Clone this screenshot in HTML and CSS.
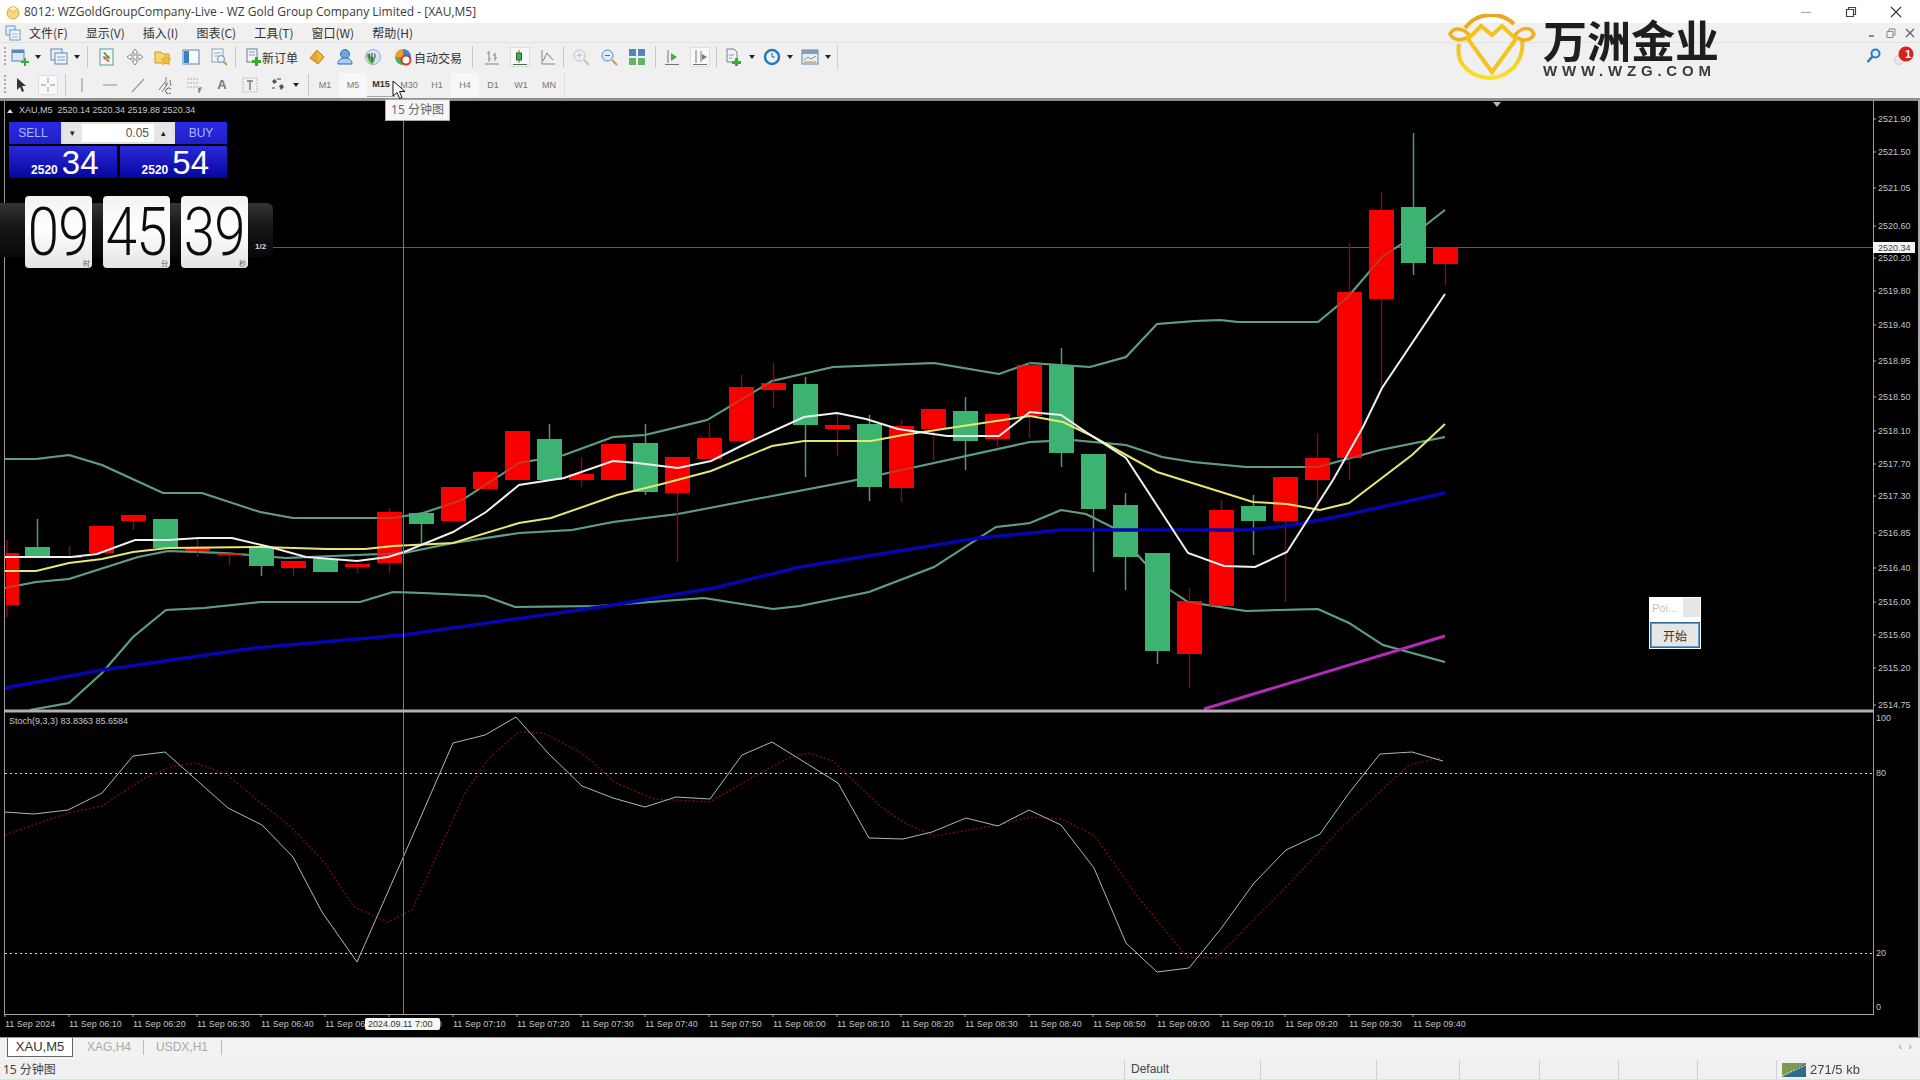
FILE: index.html
```html
<!DOCTYPE html>
<html lang="zh">
<head>
<meta charset="utf-8">
<title>8012: WZGoldGroupCompany-Live</title>
<link rel="stylesheet" href="styles.css">
</head>
<body>
<div class="window">
  <header class="titlebar">
    <svg class="app-icon" width="16" height="16" viewBox="0 0 16 16"><circle cx="8" cy="9" r="6" fill="#f6d77a" stroke="#d8a93a"/><path d="M3 5l5-3 5 3-5 3z" fill="#fdf0b8" stroke="#c9a040" stroke-width=".6"/></svg>
    <span class="title-text">8012: WZGoldGroupCompany-Live - WZ Gold Group Company Limited - [XAU,M5]</span>
    <div class="win-buttons">
      <svg width="12" height="12" viewBox="0 0 12 12"><path d="M1 6.500h10" stroke="#aaa" stroke-width="1.200"/></svg>
      <svg width="12" height="12" viewBox="0 0 12 12"><path d="M1.500 3.500h7v7h-7zM3.500 3.500v-2h7v7h-2" fill="none" stroke="#444" stroke-width="1.200"/></svg>
      <svg width="12" height="12" viewBox="0 0 12 12"><path d="M1 1l10 10M11 1L1 11" stroke="#333" stroke-width="1.100"/></svg>
    </div>
  </header>

  <nav class="menubar">
    <svg class="menu-icon" width="16" height="16" viewBox="0 0 16 16"><rect x="1" y="1" width="9" height="9" fill="#e6eef8" stroke="#6f94c4"/><rect x="5" y="5" width="10" height="10" fill="#f4f8fd" stroke="#6f94c4"/><path d="M7 9h6M7 12h6" stroke="#8fb0d8"/></svg>
    <span class="menu-item">文件(F)</span>
    <span class="menu-item">显示(V)</span>
    <span class="menu-item">插入(I)</span>
    <span class="menu-item">图表(C)</span>
    <span class="menu-item">工具(T)</span>
    <span class="menu-item">窗口(W)</span>
    <span class="menu-item">帮助(H)</span>
    <div class="child-buttons">
      <svg width="12" height="12" viewBox="0 0 12 12"><path d="M3 9h5" stroke="#666" stroke-width="1.500"/></svg>
      <svg width="12" height="12" viewBox="0 0 12 12"><path d="M2 4.500h6v6H2zM4 4.500V2h6v6H8" fill="none" stroke="#888"/></svg>
      <svg width="12" height="12" viewBox="0 0 12 12"><path d="M2 2l8 8M10 2l-8 8" stroke="#666" stroke-width="1.400"/></svg>
    </div>
  </nav>

  <div class="toolbar row-one">
    <i class="grip"></i>
    <div class="group tight">
      <div class="drop">
        <svg class="ic" viewBox="0 0 18 18"><rect x="1" y="2" width="12" height="11" fill="#dbe7f4" stroke="#5b86ba"/><rect x="1" y="2" width="12" height="3" fill="#5b86ba"/><path d="M10 13h3v-3h2v3h3v2h-3v3h-2v-3h-3z" fill="#33b233"/></svg>
        <i class="arrow"></i>
      </div>
      <div class="drop">
        <svg class="ic" viewBox="0 0 18 18"><rect x="1" y="1" width="11" height="11" fill="#e6eff8" stroke="#5b86ba"/><rect x="5" y="5" width="12" height="11" fill="#eef4fb" stroke="#5b86ba"/><path d="M7 9h8M7 12h8" stroke="#7fa2cc"/></svg>
        <i class="arrow"></i>
      </div>
    </div>
    <i class="sep"></i>
    <div class="group">
      <svg class="ic" viewBox="0 0 18 18"><rect x="2" y="1" width="13" height="16" fill="#f2f7fb" stroke="#5f9a9a"/><path d="M5 5l4 4-1 1 4 1-1-4-1 1-3-4z" fill="#38a838"/><path d="M12 13l-4-3 1-1-4-1 1 4 1-1 3 3z" fill="#e2602a"/></svg>
      <svg class="ic" viewBox="0 0 18 18"><path d="M9 1l3 4h-2v3h3V6l4 3-4 3v-2h-3v3h2l-3 4-3-4h2v-3H5v2L1 9l4-3v2h3V5H6z" fill="#fff" stroke="#8a8a8a"/></svg>
      <svg class="ic" viewBox="0 0 18 18"><path d="M1 4h6l2 2h6v9H1z" fill="#f6d56a" stroke="#c79a2a"/><path d="M12 7l1.600 3.400 3.400.4-2.500 2.400.7 3.600-3.200-1.800-3.200 1.800.7-3.600L7 10.800l3.400-.4z" fill="#f2c230" stroke="#c99820" stroke-width=".6"/></svg>
      <svg class="ic" viewBox="0 0 18 18"><rect x="1" y="2" width="16" height="14" fill="#f7fafd" stroke="#5b86ba"/><rect x="2" y="3" width="5" height="12" fill="#3a7fc0"/></svg>
      <svg class="ic" viewBox="0 0 18 18"><rect x="2" y="1" width="11" height="13" fill="#f4f6f8" stroke="#8fa3b5"/><path d="M4 5h7M4 8h5" stroke="#9ab"/><circle cx="11" cy="11" r="3.500" fill="#e8f2fb" stroke="#6f8fb0"/><path d="M13.500 13.500L17 17" stroke="#d89a30" stroke-width="2"/></svg>
    </div>
    <i class="sep"></i>
    <div class="group wide">
      <span class="labelled">
        <svg class="ic small" viewBox="0 0 16 18"><rect x="1" y="1" width="10" height="13" fill="#f2f5f8" stroke="#6a7f95"/><path d="M3 4h6M3 7h6" stroke="#8a9bb0"/><path d="M6 12h3V9h3v3h3v3h-3v3H9v-3H6z" fill="#2fae2f"/></svg>
        <span class="tool-label">新订单</span>
      </span>
      <svg class="ic" viewBox="0 0 18 18"><path d="M9 2l7 7-6 7-8-6z" fill="#f0b93a" stroke="#b57f18"/><path d="M9 2l-7 8 8 6z" fill="#e6972a" opacity=".6"/></svg>
      <svg class="ic" viewBox="0 0 18 18"><circle cx="9" cy="6" r="4.500" fill="#6aa9e0" stroke="#2f6fb0"/><path d="M2 16c0-4 3-6 7-6s7 2 7 6z" fill="#a8cdee" stroke="#2f6fb0"/></svg>
      <svg class="ic" viewBox="0 0 18 18"><circle cx="9" cy="9" r="7.500" fill="#d4e6f3" stroke="#8fb0c8"/><path d="M3 6c3-2 3 3 6 3s2 6-1 7c-3-1-5-5-5-10z" fill="#5bb45b"/><path d="M8 5v9" stroke="#333"/><path d="M5.500 5.500a5 5 0 0 0 0 5M10.500 5.500a5 5 0 0 1 0 5" fill="none" stroke="#444"/></svg>
      <span class="labelled auto">
        <svg class="ic" viewBox="0 0 18 18"><path d="M9 1a8 8 0 0 1 8 8H9z" fill="#3d88d0"/><path d="M9 1a8 8 0 0 0-8 8h8z" fill="#e8a030"/><path d="M1 9a8 8 0 0 0 8 8V9z" fill="#55b055"/><circle cx="12" cy="12" r="4.500" fill="#fff" stroke="#d83a20" stroke-width="2"/></svg>
        <span class="tool-label">自动交易</span>
      </span>
    </div>
    <i class="sep join"></i>
    <div class="group">
      <svg class="ic" viewBox="0 0 18 18"><path d="M2 16h14M6 3v11M4 5h2M6 11h2M12 5v8M10 7h2M12 10h2" fill="none" stroke="#7a8a6a"/></svg>
      <span class="pressed"><svg class="ic" viewBox="0 0 18 18"><path d="M2 16.500h14M8 2v13" stroke="#4a6a4a"/><rect x="5.500" y="5" width="5" height="7" fill="#37b04a" stroke="#2b6a2b"/></svg></span>
      <svg class="ic" viewBox="0 0 18 18"><path d="M3 2v14h13" fill="none" stroke="#7a8a7a"/><path d="M4 13l4-8 6 7" fill="none" stroke="#6a8a6a"/></svg>
    </div>
    <i class="sep short"></i>
    <div class="group">
      <svg class="ic faded" viewBox="0 0 18 18"><circle cx="7.500" cy="7.500" r="5.500" fill="#edf3f8" stroke="#8aa5bd"/><path d="M5 7.500h5M7.500 5v5" stroke="#8aa5bd"/><path d="M12 12l5 5" stroke="#c2a060" stroke-width="2"/></svg>
      <svg class="ic" viewBox="0 0 18 18"><circle cx="7.500" cy="7.500" r="5.500" fill="#dcebf8" stroke="#4f86bd"/><path d="M5 7.500h5" stroke="#3572b0"/><path d="M12 12l5 5" stroke="#d09a30" stroke-width="2"/></svg>
      <svg class="ic" viewBox="0 0 18 18"><rect x="1" y="1" width="7" height="7" fill="#4f86bd"/><rect x="10" y="1" width="7" height="7" fill="#4f86bd"/><rect x="1" y="10" width="7" height="7" fill="#66b266"/><rect x="10" y="10" width="7" height="7" fill="#66b266"/></svg>
    </div>
    <i class="sep long"></i>
    <div class="group">
      <svg class="ic" viewBox="0 0 18 18"><path d="M2 16.500h14M5 2v13" stroke="#6a7a6a"/><path d="M8 5l6 4-6 4z" fill="#4aa84a"/></svg>
      <span class="pressed"><svg class="ic" viewBox="0 0 18 18"><path d="M2 16.500h14M5 2v13M10 3v11" stroke="#6a7a6a"/><path d="M11 6l5 3-5 3z" fill="#6a7a8a"/></svg></span>
    </div>
    <i class="sep narrow"></i>
    <div class="group mid">
      <div class="drop">
        <svg class="ic" viewBox="0 0 18 18"><path d="M2 1h7l3 3v10H2z" fill="#f0f3f5" stroke="#708090"/><path d="M4 7h5M4 10h3" stroke="#8a9aaa"/><path d="M7 13h3v-3h3v3h3v3h-3v2h-3v-2H7z" fill="#2fae2f"/></svg>
        <i class="arrow"></i>
      </div>
      <div class="drop">
        <svg class="ic" viewBox="0 0 18 18"><circle cx="9" cy="9" r="7" fill="#e8f3fb" stroke="#2a78b8" stroke-width="2.500"/><path d="M9 5v4h3" fill="none" stroke="#2a5f90"/></svg>
        <i class="arrow"></i>
      </div>
      <div class="drop">
        <svg class="ic" viewBox="0 0 18 18"><rect x="1" y="2" width="16" height="14" fill="#e8eef3" stroke="#5f86a8"/><rect x="1" y="2" width="16" height="4" fill="#7f9fba"/><path d="M3 12l4-3 3 2 5-3" fill="none" stroke="#6fa070"/><path d="M3 14h12" stroke="#c08060"/></svg>
        <i class="arrow"></i>
      </div>
    </div>
    <i class="toolbar-end"></i>
    <div class="tray">
      <svg width="15" height="16" viewBox="0 0 15 16"><circle cx="9.500" cy="5.500" r="4" fill="#dcecfb" stroke="#2f78c8" stroke-width="2"/><path d="M6.500 8.500L1.500 14" stroke="#2f78c8" stroke-width="2.500"/></svg>
      <span class="notify"><svg width="20" height="20" viewBox="0 0 20 20"><circle cx="5" cy="14" r="4.500" fill="#e6e6e6" stroke="#ccc"/><circle cx="12" cy="8" r="7.500" fill="#d8201e"/></svg><b class="notify-num">1</b></span>
    </div>
  </div>

  <div class="toolbar row-two">
    <i class="grip"></i>
    <div class="group">
      <svg class="ic" viewBox="0 0 18 18"><path d="M6 2v12l3-3 2 5 2-1-2-5h4z" fill="#333"/></svg>
      <span class="pressed"><svg class="ic" viewBox="0 0 18 18"><path d="M9 2v5M9 11v5M2 9h5M11 9h5" stroke="#7f98b0"/></svg></span>
    </div>
    <i class="sep draw"></i>
    <div class="group">
      <svg class="ic" viewBox="0 0 18 18"><path d="M9 2v14" stroke="#aaa" stroke-width="1.400"/></svg>
      <svg class="ic" viewBox="0 0 18 18"><path d="M2 9h14" stroke="#aaa" stroke-width="1.400"/></svg>
      <svg class="ic" viewBox="0 0 18 18"><path d="M3 16L15 3" stroke="#999" stroke-width="1.200"/></svg>
      <svg class="ic" viewBox="0 0 18 18"><path d="M2 14l6-8M5 16l6-9M9 1v9M13 4l1 6" stroke="#777" fill="none"/><path d="M14 13a3 3 0 1 0 0 4" stroke="#555" fill="none"/></svg>
      <svg class="ic" viewBox="0 0 18 18"><path d="M2 3h11M2 7h11M2 11h11" stroke="#aaa" stroke-dasharray="2 1"/><path d="M14 12v5M14 12h3M14 14h2" stroke="#555" fill="none"/></svg>
      <span class="tool-glyph">A</span>
      <svg class="ic" viewBox="0 0 18 18"><rect x="2" y="2" width="14" height="14" fill="none" stroke="#bbb" stroke-dasharray="2 1"/><path d="M6 5h6M9 5v9" stroke="#777" stroke-width="1.400"/></svg>
      <div class="drop narrow-drop">
        <svg class="ic" viewBox="0 0 18 18"><path d="M3 5l3-2 2 3-3 2zM10 10l3-2 2 3-3 3z" fill="#555"/><path d="M8 3h4M3 12h3" stroke="#4a9a4a" stroke-width="1.500"/></svg>
        <i class="arrow"></i>
      </div>
    </div>
    <i class="sep period-sep"></i>
    <div class="periods">
      <span class="period">M1</span>
      <span class="period lit">M5</span>
      <span class="period current">M15</span>
      <span class="period">M30</span>
      <span class="period">H1</span>
      <span class="period lit">H4</span>
      <span class="period">D1</span>
      <span class="period">W1</span>
      <span class="period">MN</span>
    </div>
  </div>

  <main class="chart">
    <svg class="pane" width="1920" height="612" viewBox="0 101 1920 612">
      <defs>
        <g id="bands">
          <polyline points="5,459 36,459 69,455 102,465 163,493 202,493 260,512 293,518 393,518 423,513 462,500 519,463 564,455 613,437 645,435 707,420 772,381 833,367 934,363 999,374 1030,363 1090,367 1126,357 1157,324 1195,321 1220,320 1238,322 1318,322 1347,298 1382,257 1400,245 1445,210"/>
          <polyline points="5,588 36,582 69,579 138,557 168,551 224,553 286,558 404,553 453,543 519,533 572,530 613,522 678,514 788,493 851,481 934,463 1030,442 1072,440 1126,445 1162,457 1193,462 1246,467 1318,467 1380,450 1445,437"/>
          <polyline points="30,710 69,703 102,673 133,637 166,610 204,608 260,602 360,602 393,592 423,593 485,596 515,607 597,606 704,598 773,609 800,606 869,592 934,567 996,527 1030,523 1061,510 1086,514 1112,527 1144,562 1170,590 1188,602 1246,611 1318,609 1349,623 1383,645 1445,662"/>
        </g>
      </defs>
      <path class="frame" d="M4.500 101V713M1873.500 101V713"/>
      <path class="tick" d="M1873 119h3M1873 152h3M1873 188h3M1873 226h3M1873 258h3M1873 291h3M1873 325h3M1873 361h3M1873 397h3M1873 431h3M1873 464h3M1873 496h3M1873 533h3M1873 568h3M1873 602h3M1873 635h3M1873 668h3M1873 705h3"/>
      <path class="cross-dim" d="M5 247.500H1873"/>
      <use href="#bands" class="band"/>
      <path class="wick-red" d="M7 540V617M69.500 546V558M133.500 515V530M197.500 538V557M229.500 553V565M293.500 561V576M357.500 564V573M389.500 508V573M581.500 457V487M677.500 457V562M709.500 423V459M741.500 375V441M773.500 363V408M837.500 413V456M901.500 420V502M933.500 409V460M997.500 414V447M1029.500 361V438M1189.500 588V688M1221.500 500V606M1285.500 477V602M1317.500 433V513M1349.500 243V480M1381.500 192V387M1445.500 264V285"/>
      <path class="wick-green" d="M37.500 519V547M261.500 566V576M421.500 524V543M549.500 424V439M645.500 424V495M805.500 377V477M869.500 415V501M965.500 397V470M1061.500 348V467M1093.500 509V572M1125.500 493V590M1157.500 651V664M1253.500 495V555M1413.500 133V275"/>
      <path class="body-red" d="M6 553h13v52h-13zM57 556h25v2h-25zM89 526h25v27h-25zM121 515h25v6h-25zM185 548h25v3h-25zM217 553h25v2h-25zM281 561h25v7h-25zM345 564h25v3h-25zM377 512h25v51h-25zM441 487h25v34h-25zM473 472h25v17h-25zM505 431h25v49h-25zM569 474h25v6h-25zM601 444h25v36h-25zM665 457h25v36h-25zM697 438h25v21h-25zM729 387h25v54h-25zM761 383h25v7h-25zM825 425h25v4h-25zM889 426h25v62h-25zM921 409h25v20h-25zM985 414h25v25h-25zM1017 365h25v51h-25zM1177 601h25v53h-25zM1209 510h25v96h-25zM1273 477h25v44h-25zM1305 458h25v22h-25zM1337 292h25v166h-25zM1369 210h25v89h-25zM1433 247h25v17h-25z"/>
      <path class="body-green" d="M25 547h25v10h-25zM153 519h25v29h-25zM249 548h25v18h-25zM313 559h25v13h-25zM409 513h25v11h-25zM537 439h25v41h-25zM633 443h25v49h-25zM793 384h25v41h-25zM857 424h25v63h-25zM953 411h25v30h-25zM1049 365h25v88h-25zM1081 454h25v55h-25zM1113 505h25v52h-25zM1145 553h25v98h-25zM1241 506h25v15h-25zM1401 207h25v56h-25z"/>
      <use href="#bands" class="band over"/>
      <polyline class="ma-blue" points="5,688 102,670 255,648 403,635 607,606 714,588 800,567 979,538 1061,530 1246,530 1287,526 1336,517 1445,493"/>
      <polyline class="ma-yellow" points="5,571 36,571 69,563 102,559 133,552 168,548 260,547 327,549 365,549 393,546 453,543 519,523 551,518 617,495 658,485 711,471 772,446 804,441 871,441 903,435 1030,416 1063,422 1090,435 1157,472 1253,502 1287,504 1320,510 1349,503 1412,455 1445,424"/>
      <polyline class="ma-white" points="5,557 71,557 97,554 135,540 168,540 199,538 232,538 270,547 306,557 357,561 388,557 404,552 453,532 486,512 519,485 564,478 613,461 637,463 678,468 711,461 747,443 804,417 837,413 866,419 898,429 947,436 999,436 1030,412 1061,415 1086,432 1126,458 1188,553 1224,566 1255,567 1287,552 1333,480 1363,427 1382,388 1445,294"/>
      <polyline class="ma-magenta" points="1204,709 1445,636"/>
      <path class="cross" d="M403.500 101V713"/>
      <path class="split" d="M4 711H1873"/>
      <path class="shift-mark" d="M1493 102h8l-4 5z"/>
      <g class="axis">
        <text x="1878" y="122">2521.90</text><text x="1878" y="155">2521.50</text><text x="1878" y="191">2521.05</text><text x="1878" y="229">2520.60</text><text x="1878" y="261">2520.20</text><text x="1878" y="294">2519.80</text><text x="1878" y="328">2519.40</text><text x="1878" y="364">2518.95</text><text x="1878" y="400">2518.50</text><text x="1878" y="434">2518.10</text><text x="1878" y="467">2517.70</text><text x="1878" y="499">2517.30</text><text x="1878" y="536">2516.85</text><text x="1878" y="571">2516.40</text><text x="1878" y="605">2516.00</text><text x="1878" y="638">2515.60</text><text x="1878" y="671">2515.20</text><text x="1878" y="708">2514.75</text>
      </g>
      <rect class="price-box" x="1873" y="242" width="42" height="11"/>
      <text class="price-now" x="1878" y="251">2520.34</text>
      <path class="legend-mark" d="M7 113l3-4 3 4z"/>
      <text class="legend" x="19" y="113">XAU,M5  2520.14 2520.34 2519.88 2520.34</text>
    </svg>

    <svg class="pane" width="1920" height="301" viewBox="0 713 1920 301">
      <path class="frame" d="M4.500 713V1014M1873.500 713V1014"/>
      <path class="level" d="M5 773.500H1873M5 953.500H1873"/>
      <polyline class="stoch-signal" points="5,835 68,813 102,806 145,778 170,767 196,763 228,775 257,800 291,827 325,863 354,907 388,922 412,910 436,857 465,793 490,757 519,732 543,733 582,753 616,783 654,799 710,802 760,773 789,758 808,753 833,761 881,807 905,823 934,836 998,825 1031,817 1061,819 1094,835 1138,897 1187,957 1216,958 1288,885 1342,827 1409,765 1443,757"/>
      <polyline class="stoch-main" points="5,812 34,814 68,810 102,793 133,756 165,752 228,808 262,825 293,857 322,912 357,962 402,860 453,743 485,735 516,717 548,753 582,786 613,798 645,807 676,797 710,799 742,755 772,742 838,783 869,838 903,839 932,832 966,818 998,826 1029,810 1061,825 1094,868 1126,943 1157,972 1189,968 1220,930 1254,883 1286,850 1320,834 1349,793 1380,754 1412,752 1443,761"/>
      <path class="cross" d="M403.500 713V1014"/>
      <text class="legend" x="9" y="724">Stoch(9,3,3) 83.8363 85.6584</text>
      <g class="axis">
        <text x="1876" y="721">100</text><text x="1876" y="776">80</text><text x="1876" y="956">20</text><text x="1876" y="1010">0</text>
      </g>
    </svg>

    <svg class="pane" width="1920" height="23" viewBox="0 1014 1920 23">
      <path class="bottom-line" d="M4 1014.500H1874"/>
      <path class="tick" d="M5 1014v3M69 1014v3M133 1014v3M197 1014v3M261 1014v3M325 1014v3M389 1014v3M453 1014v3M517 1014v3M581 1014v3M645 1014v3M709 1014v3M773 1014v3M837 1014v3M901 1014v3M965 1014v3M1029 1014v3M1093 1014v3M1157 1014v3M1221 1014v3M1285 1014v3M1349 1014v3M1413 1014v3"/>
      <g class="axis">
        <text x="5" y="1027">11 Sep 2024</text><text x="69" y="1027">11 Sep 06:10</text><text x="133" y="1027">11 Sep 06:20</text><text x="197" y="1027">11 Sep 06:30</text><text x="261" y="1027">11 Sep 06:40</text><text x="325" y="1027">11 Sep 06:50</text><text x="389" y="1027">11 Sep 07:00</text><text x="453" y="1027">11 Sep 07:10</text><text x="517" y="1027">11 Sep 07:20</text><text x="581" y="1027">11 Sep 07:30</text><text x="645" y="1027">11 Sep 07:40</text><text x="709" y="1027">11 Sep 07:50</text><text x="773" y="1027">11 Sep 08:00</text><text x="837" y="1027">11 Sep 08:10</text><text x="901" y="1027">11 Sep 08:20</text><text x="965" y="1027">11 Sep 08:30</text><text x="1029" y="1027">11 Sep 08:40</text><text x="1093" y="1027">11 Sep 08:50</text><text x="1157" y="1027">11 Sep 09:00</text><text x="1221" y="1027">11 Sep 09:10</text><text x="1285" y="1027">11 Sep 09:20</text><text x="1349" y="1027">11 Sep 09:30</text><text x="1413" y="1027">11 Sep 09:40</text>
      </g>
      <rect class="time-box" x="365" y="1018" width="75" height="12" rx="2"/>
      <text class="time-now" x="368" y="1027">2024.09.11 7:00</text>
    </svg>

    <section class="trade-panel">
      <div class="trade-top">
        <span class="trade-btn">SELL</span>
        <div class="lot">
          <span class="spin">▾</span>
          <span class="lot-value">0.05</span>
          <span class="spin">▴</span>
        </div>
        <span class="trade-btn buy">BUY</span>
      </div>
      <div class="trade-prices">
        <div class="quote"><small>2520</small><strong>34</strong></div>
        <div class="quote"><small>2520</small><strong>54</strong></div>
      </div>
    </section>

    <section class="clock">
      <div class="tile"><span class="digits">09</span><em class="unit">时</em></div>
      <div class="tile"><span class="digits">45</span><em class="unit">分</em></div>
      <div class="tile"><span class="digits">39</span><em class="unit">秒</em></div>
      <span class="clock-page">1/2</span>
    </section>

    <section class="point-widget">
      <div class="point-row"><span class="point-label">Poi...</span><i class="point-swatch"></i></div>
      <button class="start-btn" type="button">开始</button>
    </section>
  </main>

  <div class="tabs">
    <span class="tab active">XAU,M5</span>
    <span class="tab">XAG,H4</span>
    <i class="tab-sep"></i>
    <span class="tab">USDX,H1</span>
    <i class="tab-sep"></i>
    <span class="tab-nav">‹ &nbsp;›</span>
  </div>

  <footer class="statusbar">
    <span class="cell hint">15 分钟图</span>
    <span class="cell profile">Default</span>
    <span class="cell w116"></span>
    <span class="cell w83"></span>
    <span class="cell w80"></span>
    <span class="cell w79"></span>
    <span class="cell w79"></span>
    <span class="cell w79"></span>
    <span class="cell conn">
      <svg width="24" height="14" viewBox="0 0 24 14"><rect width="24" height="14" fill="#2f6b8c"/><path d="M0 0h24L0 14z" fill="#7e9a4e"/><path d="M0 13L24 2" stroke="#e8f0e0" stroke-dasharray="2 1"/></svg>
      271/5 kb
    </span>
  </footer>
</div>

<div class="logo">
  <svg width="90" height="72" viewBox="0 0 90 72">
    <defs><linearGradient id="gold" x1="0" y1="0" x2="0" y2="1"><stop offset="0" stop-color="#e9a41f"/><stop offset="1" stop-color="#f7e02a"/></linearGradient></defs>
    <path d="M17 14A33 33 0 0 1 66 10M74 26A33 33 0 0 1 12 46 33 33 0 0 1 11 30" fill="none" stroke="url(#gold)" stroke-width="4"/>
    <path d="M22 22C14 12 5 14 2 20c3 6 11 8 20 2zM66 22c8-10 17-9 20-2-3 7-11 8-20 2z" fill="none" stroke="#eeb121" stroke-width="3.500"/>
    <path d="M20 25l13-13 11 9 10-9 14 13-24 33z" fill="none" stroke="#f2c41f" stroke-width="4"/>
  </svg>
  <div class="logo-words">
    <span class="logo-cn">万洲金业</span>
    <span class="logo-en">WWW.WZG.COM</span>
  </div>
</div>

<div class="tooltip">15 分钟图</div>
<svg class="pointer" width="14" height="20" viewBox="0 0 14 20"><path d="M1 1v15l4-3.500 2.500 6 2.500-1-2.500-6H13z" fill="#fff" stroke="#111"/></svg>
</body>
</html>
```
FILE: styles.css
```css
* { box-sizing: border-box; }
html, body { margin: 0; padding: 0; width: 1920px; height: 1080px; overflow: hidden; background: #f0f0f0; }
body { position: relative; font-family: "Open Sans", "Noto Sans CJK SC", sans-serif; color: #333; }
i, em { font-style: normal; }

.window { display: flex; flex-direction: column; width: 1920px; height: 1080px; filter: blur(.45px); }

.titlebar { display: flex; align-items: center; height: 23px; background: #fff; padding-left: 5px; }
.app-icon { margin-right: 3px; }
.title-text { font-size: 12px; color: #3a3a3a; white-space: nowrap; }
.win-buttons { margin-left: auto; display: flex; gap: 33px; padding-right: 18px; }

.menubar { display: flex; align-items: center; height: 20px; background: #f0f0f0; border-bottom: 1px solid #e2e2e2; padding-left: 5px; }
.menu-icon { margin-right: 8px; }
.menu-item { font-family: "Noto Sans CJK SC", sans-serif; font-size: 12px; color: #333; margin-right: 18px; white-space: nowrap; }
.child-buttons { margin-left: auto; display: flex; gap: 7px; padding-right: 4px; }

.toolbar { display: flex; align-items: center; background: #f0f0f0; padding-left: 4px; position: relative; }
.row-one { height: 28px; }
.row-two { height: 27px; }
.grip { width: 2px; height: 20px; margin-right: 5px; background: repeating-linear-gradient(#aaa 0 2px, transparent 2px 4px); }
.group { display: flex; align-items: center; gap: 10px; }
.group.tight { gap: 9px; }
.group.wide { gap: 10px; }
.group.mid { gap: 8px; }
.ic { display: block; width: 18px; height: 18px; flex: none; }
.ic.small { width: 16px; }
.ic.faded { opacity: .6; }
.drop { display: flex; align-items: center; gap: 6px; }
.arrow { width: 0; height: 0; border: 3px solid transparent; border-top: 4px solid #222; border-bottom: 0; }
.narrow-drop { gap: 6px; }
.sep { width: 1px; height: 22px; background: #c9c9c9; margin: 0 10px 0 7px; flex: none; }
.sep.join { margin: 0 10px 0 10px; }
.sep.short { margin: 0 8px 0 6px; }
.sep.long { margin: 0 7px 0 9px; }
.sep.narrow { margin: 0 8px 0 7px; }
.sep.draw { margin: 0 7px 0 8px; }
.sep.period-sep { margin: 0 2px 0 9px; }
.labelled { display: flex; align-items: center; }
.labelled.auto { gap: 2px; margin-left: 2px; }
.tool-label { font-family: "Noto Sans CJK SC", sans-serif; font-size: 12px; color: #333; white-space: nowrap; }
.pressed { display: block; background: #f8f8f8; outline: 1px solid #dcdcdc; box-shadow: 0 0 0 1px #f8f8f8; }
.toolbar-end { width: 1px; height: 25px; background: #cfcfcf; margin-left: 6px; }
.tray { position: absolute; right: 6px; top: 3px; display: flex; align-items: center; gap: 13px; }
.notify { position: relative; display: block; height: 20px; }
.notify-num { position: absolute; left: 9px; top: 0; width: 10px; text-align: center; color: #fff; font: 700 11px/16px "Liberation Sans", sans-serif; }
.tool-glyph { width: 18px; text-align: center; font: 700 13px "Liberation Sans", sans-serif; color: #777; }
.periods { display: flex; border-right: 1px solid #ddd; padding-right: 1px; }
.period { width: 28px; height: 24px; display: flex; align-items: center; justify-content: center; font: 9px "Liberation Sans", sans-serif; color: #777; }
.period.lit { background: #f7f7f7; }
.period.current { color: #333; font-weight: 700; border-bottom: 1px solid #aaa; }

.chart { position: relative; flex: none; height: 939px; background: #000; border-top: 3px solid #8f8f8f; border-right: 2px solid #aaa; overflow: hidden; }
.pane { display: block; }
.pane polyline, .band { fill: none; }
.frame { stroke: #9a9a9a; fill: none; }
.tick { stroke: #aaa; fill: none; }
.band { stroke: #5f9d83; stroke-width: 2; fill: none; }
.band polyline { fill: none; }
.band.over { opacity: .35; }
.wick-red { stroke: #7c0a16; stroke-width: 1.500; fill: none; }
.wick-green { stroke: #4a9d68; stroke-width: 1.500; fill: none; }
.body-red { fill: #f80000; }
.body-green { fill: #3cb371; }
.ma-blue { stroke: #0606b0; stroke-width: 3.500; }
.ma-yellow { stroke: #e8e870; stroke-width: 2; }
.ma-white { stroke: #f0f0f0; stroke-width: 2; }
.ma-magenta { stroke: #b22ab8; stroke-width: 3; }
.cross { stroke: #7c7c7c; stroke-width: 1; fill: none; }
.cross-dim { stroke: #5c5c5c; stroke-width: 1; fill: none; }
.split { stroke: #b0b0b0; stroke-width: 3; }
.shift-mark { fill: #bbb; }
.axis text { font: 9px "Liberation Sans", sans-serif; fill: #c4c4c4; }
.price-box { fill: #f4f4f4; }
.price-now { font: 9px "Liberation Sans", sans-serif; fill: #444; }
.legend-mark { fill: #ddd; }
.legend { font: 9px "Liberation Sans", sans-serif; fill: #c8c8c8; white-space: pre; }
.level { stroke: #d6d6d6; stroke-dasharray: 2 3; fill: none; }
.stoch-main { stroke: #a7bdb4; stroke-width: 1; }
.stoch-signal { stroke: #6a0a18; stroke-width: 1.500; stroke-dasharray: 2 2; }
.bottom-line { stroke: #aaa; }
.time-box { fill: #f6f6f6; }
.time-now { font: 9px "Liberation Sans", sans-serif; fill: #333; }

.trade-panel { position: absolute; left: 9px; top: 21px; width: 218px; }
.trade-top { display: flex; height: 22px; }
.trade-btn { width: 52px; display: flex; align-items: center; justify-content: center; padding-right: 4px; background: linear-gradient(#2a2ae6, #2020c8); color: #a8bcff; font: 12px "Liberation Sans", sans-serif; }
.trade-btn.buy { margin-left: auto; padding-right: 0; }
.lot { width: 114px; display: flex; align-items: center; justify-content: space-between; background: #fff; border: 2px solid #e0e0e0; color: #555; font: 12px "Liberation Sans", sans-serif; }
.spin { width: 19px; height: 100%; display: flex; align-items: center; justify-content: center; background: #e6e6e6; font-size: 9px; color: #222; }
.lot-value { margin-left: auto; margin-right: 5px; }
.trade-prices { display: flex; gap: 3px; margin-top: 2px; }
.quote { flex: 1; height: 32px; display: flex; align-items: baseline; justify-content: flex-end; gap: 4px; padding-right: 18px; background: linear-gradient(#2a2ad8, #0606a0); color: #fff; }
.quote small { font: 700 12px "Liberation Sans", sans-serif; }
.quote strong { font: 400 33px/33px "Liberation Sans", sans-serif; }

.clock { position: absolute; left: 0; top: 102px; width: 273px; height: 54px; display: flex; gap: 11px; padding-left: 25px; background: linear-gradient(#343434, #161616 45%, #080808); border-radius: 0 6px 6px 0; }
.tile { position: relative; flex: none; width: 67px; height: 72px; margin-top: -7px; background: linear-gradient(#f2f2f2, #fff 45%, #e4e4e4); border-radius: 4px; display: flex; align-items: center; justify-content: center; }
.digits { font: 300 67px/50px Roboto, sans-serif; color: #0c0c0c; transform: scaleX(.84); letter-spacing: -1px; }
.unit { position: absolute; right: 2px; bottom: 0; font: 7px/9px "Noto Sans CJK SC", sans-serif; color: #555; }
.clock-page { align-self: flex-start; margin-left: -4px; margin-top: 39px; font: 700 8px/10px "Liberation Sans", sans-serif; color: #ddd; }

.point-widget { position: absolute; left: 1649px; top: 496px; width: 52px; height: 52px; background: #fff; display: flex; flex-direction: column; }
.point-row { height: 25px; display: flex; align-items: flex-start; padding: 1px 1px 0 3px; gap: 2px; }
.point-label { font: 11px/20px "Liberation Sans", sans-serif; color: #c2c2c2; width: 30px; }
.point-swatch { width: 18px; height: 19px; background: #e6e6e6; }
.start-btn { flex: 1; margin: 0 1px 1px; padding: 0; background: #e6e6e6; border: 2px solid #5d9ed4; outline: 1px solid #2f6a9a; outline-offset: -1px; font: 12px "Noto Sans CJK SC", sans-serif; color: #333; }

.tabs { display: flex; align-items: flex-start; height: 23px; background: #f2f2f2; padding-left: 7px; border-top: 1px solid #999; position: relative; }
.tab { font: 12px/18px "Liberation Sans", sans-serif; color: #aaa; white-space: nowrap; }
.tab:nth-of-type(2) { margin-left: 14px; margin-right: 12px; }
.tab:nth-of-type(3) { margin-left: 12px; margin-right: 13px; }
.tab.active { width: 66px; text-align: center; height: 19px; color: #333; background: #fff; border: 1px solid #666; border-top: 0; font-size: 13px; }
.tab-sep { width: 1px; height: 15px; margin-top: 2px; background: #bbb; }
.tab-nav { position: absolute; right: 8px; top: 2px; font: 11px "Liberation Sans", sans-serif; color: #999; }

.statusbar { display: flex; align-items: stretch; height: 20px; background: #f0f0f0; border-bottom: 1px solid #c8f3c8; font: 12px/19px "Liberation Sans", sans-serif; color: #444; }
.cell { display: flex; align-items: center; border-left: 1px solid #cfcfcf; flex: none; white-space: nowrap; }
.hint { width: 1124px; padding-left: 3px; border-left: 0; font-family: "Noto Sans", "Noto Sans CJK SC", sans-serif; }
.profile { width: 136px; padding-left: 6px; }
.w116 { width: 116px; }
.w83 { width: 83px; }
.w80 { width: 80px; }
.w79 { width: 79px; }
.conn { flex: 1; gap: 4px; padding-left: 5px; font-size: 13px; }

.logo { position: absolute; left: 1448px; top: 14px; display: flex; gap: 5px; }
.logo-words { display: flex; flex-direction: column; margin-top: 2px; }
.logo-cn { font: 700 44px/47px "Noto Sans CJK SC", sans-serif; color: #1e1e1e; white-space: nowrap; }
.logo-en { font: 700 15px/16px "Liberation Sans", sans-serif; letter-spacing: 4.800px; color: #3a3a3a; white-space: nowrap; }

.tooltip { position: absolute; left: 385px; top: 99px; width: 65px; height: 22px; background: #f6f6f6; border: 1px solid #aaa; font: 12px/20px "Noto Sans", "Noto Sans CJK SC", sans-serif; color: #666; text-align: center; white-space: nowrap; }
.pointer { position: absolute; left: 392px; top: 80px; }
```
